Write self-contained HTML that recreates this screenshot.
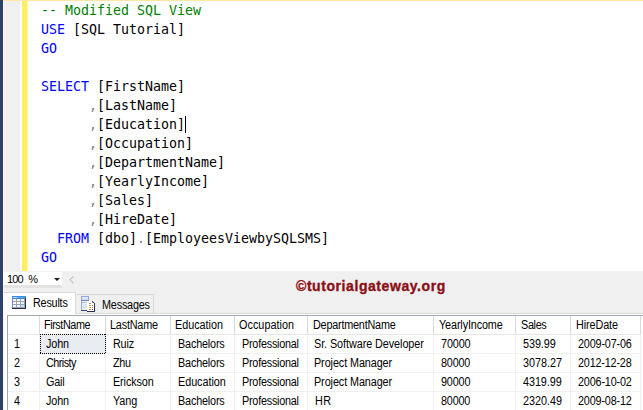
<!DOCTYPE html>
<html><head><meta charset="utf-8">
<style>
html,body{margin:0;padding:0;}
body{width:643px;height:410px;overflow:hidden;position:relative;background:#fff;font-family:"Liberation Sans",sans-serif;}
div,pre{position:absolute;}
#lb{left:0;top:0;width:3px;height:410px;background:#2f4166;}
#lb2{left:3px;top:1px;width:1px;height:409px;background:#f7f7f7;}
#topl{left:3px;top:0;width:640px;height:1px;background:#ffe8a6;}
#margin{left:4px;top:1px;width:16px;height:270px;background:#f0f0f0;}
#ybar{left:22px;top:1px;width:6px;height:270px;background:linear-gradient(90deg,#ffee62 0,#ffee62 5px,#fff6b0 5px,#fff6b0 6px);}
#code{left:41px;top:1px;margin:0;font-family:"DejaVu Sans Mono","Liberation Mono",monospace;font-size:13.29px;line-height:19px;color:#000;white-space:pre;}
.k{color:#0000ff}.c{color:#008000}.g{color:#808080}
#caret{left:185px;top:116px;width:1px;height:17px;background:#000;}
#bottom{left:4px;top:271px;width:639px;height:42px;background:#f0f0f0;}
#zoom{left:4px;top:272px;width:58px;height:13px;background:#fff;}
#zoomsh{left:4px;top:285px;width:58px;height:3px;background:#e3e3e3;}
#zt{left:7px;top:272px;font-size:11px;line-height:14px;letter-spacing:-0.1px;white-space:nowrap;}
#za{left:54px;top:278px;width:0;height:0;border-left:3px solid transparent;border-right:3px solid transparent;border-top:3px solid #1e1e1e;}
#wm{left:296px;top:277px;font-weight:bold;font-size:14px;letter-spacing:0.57px;color:#8b0f14;-webkit-text-stroke:0.35px #8b0f14;white-space:nowrap;line-height:18px;}
#pane{left:4px;top:313px;width:639px;height:97px;background:#fff;border-top:1px solid #d9d9d9;box-sizing:border-box;}
#tab1{left:4px;top:292px;width:72px;height:22px;background:#fff;border-top:1px solid #d9d9d9;border-right:1px solid #d9d9d9;box-sizing:border-box;}
#tab2{left:76px;top:294px;width:78px;height:19px;background:#f0f0f0;border:1px solid #d9d9d9;border-left:none;border-bottom:none;box-sizing:border-box;}
.tl{font-size:11px;line-height:14px;color:#000;letter-spacing:-0.4px;white-space:nowrap;}
#gridbg{left:7px;top:315px;width:636px;height:95px;border-top:1px solid #a3a7b0;border-left:1px solid #a3a7b0;box-sizing:border-box;}
#sel{left:40px;top:334px;width:66px;height:20px;background:#e9edf1;}
.dh{width:66px;height:1px;background:repeating-linear-gradient(90deg,#000 0,#000 1px,transparent 1px,transparent 2px);}
.dv{width:1px;height:20px;background:repeating-linear-gradient(180deg,#000 0,#000 1px,transparent 1px,transparent 2px);}
.vl{top:316px;width:1px;height:94px;background:#f0f0f0;}
.vh{top:316px;width:1px;height:18px;background:#dadada;}
.hl{left:8px;height:1px;width:633px;background:#f0f0f0;}
.t{font-size:12px;line-height:14px;color:#000;white-space:nowrap;transform:scaleX(0.9);transform-origin:0 0;}
</style></head><body>
<div id="margin"></div><div id="ybar"></div>
<pre id="code"><span class="c">-- Modified SQL View</span>
<span class="k">USE</span> [SQL Tutorial]
<span class="k">GO</span>

<span class="k">SELECT</span> [FirstName]
      <span class="g">,</span>[LastName]
      <span class="g">,</span>[Education]
      <span class="g">,</span>[Occupation]
      <span class="g">,</span>[DepartmentName]
      <span class="g">,</span>[YearlyIncome]
      <span class="g">,</span>[Sales]
      <span class="g">,</span>[HireDate]
  <span class="k">FROM</span> [dbo]<span class="g">.</span>[EmployeesViewbySQLSMS]
<span class="k">GO</span></pre>
<div id="caret"></div>
<div id="bottom"></div>
<div id="zoom"></div><div id="zoomsh"></div><div id="zt"><span style="letter-spacing:-0.9px">100</span><span style="margin-left:2.7px"> %</span></div><div id="za"></div>
<svg style="position:absolute;left:68px;top:275px" width="8" height="10" viewBox="0 0 8 10"><path d="M5.5 1.5 L1.8 4.8 L5.5 8" fill="none" stroke="#c4c4c4" stroke-width="1.1"/></svg>
<div id="wm">©tutorialgateway.org</div>
<div id="pane"></div>
<div id="gridbg"></div>
<div class="vl" style="left:39px"></div><div class="vh" style="left:39px"></div>
<div class="vl" style="left:105px"></div><div class="vh" style="left:105px"></div>
<div class="vl" style="left:170px"></div><div class="vh" style="left:170px"></div>
<div class="vl" style="left:234px"></div><div class="vh" style="left:234px"></div>
<div class="vl" style="left:307px"></div><div class="vh" style="left:307px"></div>
<div class="vl" style="left:433px"></div><div class="vh" style="left:433px"></div>
<div class="vl" style="left:515px"></div><div class="vh" style="left:515px"></div>
<div class="vl" style="left:570px"></div><div class="vh" style="left:570px"></div>
<div class="vl" style="left:640px"></div><div class="vh" style="left:640px"></div>
<div class="hl" style="top:334px;background:#e6e6e6"></div>
<div class="hl" style="top:353px"></div>
<div class="hl" style="top:372px"></div>
<div class="hl" style="top:391px"></div>
<div id="sel"></div><div class="dh" style="left:40px;top:334px"></div><div class="dh" style="left:40px;top:353px"></div><div class="dv" style="left:40px;top:334px"></div><div class="dv" style="left:105px;top:334px"></div>
<div class="t" id="h0" style="left:44.28px;top:318px;letter-spacing:-0.458px">FirstName</div>
<div class="t" id="h1" style="left:110.20px;top:318px;letter-spacing:-0.198px">LastName</div>
<div class="t" id="h2" style="left:175.42px;top:318px;letter-spacing:-0.020px">Education</div>
<div class="t" id="h3" style="left:239.32px;top:318px;letter-spacing:0.049px">Occupation</div>
<div class="t" id="h4" style="left:312.94px;top:318px;letter-spacing:-0.217px">DepartmentName</div>
<div class="t" id="h5" style="left:438.80px;top:318px;letter-spacing:-0.129px">YearlyIncome</div>
<div class="t" id="h6" style="left:520.56px;top:318px;letter-spacing:-0.361px">Sales</div>
<div class="t" id="h7" style="left:576.04px;top:318px;letter-spacing:-0.091px">HireDate</div>
<div class="t" id="r0c0" style="left:14.40px;top:337px;letter-spacing:0.000px">1</div>
<div class="t" id="r0c1" style="left:46.14px;top:337px;letter-spacing:-0.109px">John</div>
<div class="t" id="r0c2" style="left:112.78px;top:337px;letter-spacing:-0.204px">Ruiz</div>
<div class="t" id="r0c3" style="left:178.16px;top:337px;letter-spacing:-0.179px">Bachelors</div>
<div class="t" id="r0c4" style="left:241.98px;top:337px;letter-spacing:-0.245px">Professional</div>
<div class="t" id="r0c5" style="left:314.18px;top:337px;letter-spacing:-0.065px">Sr. Software Developer</div>
<div class="t" id="r0c6" style="left:441.19px;top:337px;letter-spacing:-0.130px">70000</div>
<div class="t" id="r0c7" style="left:523.11px;top:337px;letter-spacing:-0.076px">539.99</div>
<div class="t" id="r0c8" style="left:577.78px;top:337px;letter-spacing:-0.171px">2009-07-06</div>
<div class="t" id="r1c0" style="left:13.70px;top:356px;letter-spacing:0.000px">2</div>
<div class="t" id="r1c1" style="left:46.15px;top:356px;letter-spacing:-0.574px">Christy</div>
<div class="t" id="r1c2" style="left:113.41px;top:356px;letter-spacing:-0.266px">Zhu</div>
<div class="t" id="r1c3" style="left:178.16px;top:356px;letter-spacing:-0.179px">Bachelors</div>
<div class="t" id="r1c4" style="left:241.98px;top:356px;letter-spacing:-0.245px">Professional</div>
<div class="t" id="r1c5" style="left:314.45px;top:356px;letter-spacing:-0.089px">Project Manager</div>
<div class="t" id="r1c6" style="left:440.97px;top:356px;letter-spacing:-0.205px">80000</div>
<div class="t" id="r1c7" style="left:523.00px;top:356px;letter-spacing:0.000px">3078.27</div>
<div class="t" id="r1c8" style="left:577.80px;top:356px;letter-spacing:-0.189px">2012-12-28</div>
<div class="t" id="r2c0" style="left:13.70px;top:375px;letter-spacing:0.000px">3</div>
<div class="t" id="r2c1" style="left:46.48px;top:375px;letter-spacing:-0.187px">Gail</div>
<div class="t" id="r2c2" style="left:112.72px;top:375px;letter-spacing:-0.103px">Erickson</div>
<div class="t" id="r2c3" style="left:178.32px;top:375px;letter-spacing:-0.042px">Education</div>
<div class="t" id="r2c4" style="left:241.98px;top:375px;letter-spacing:-0.245px">Professional</div>
<div class="t" id="r2c5" style="left:314.45px;top:375px;letter-spacing:-0.089px">Project Manager</div>
<div class="t" id="r2c6" style="left:440.84px;top:375px;letter-spacing:-0.175px">90000</div>
<div class="t" id="r2c7" style="left:523.16px;top:375px;letter-spacing:-0.063px">4319.99</div>
<div class="t" id="r2c8" style="left:577.79px;top:375px;letter-spacing:-0.172px">2006-10-02</div>
<div class="t" id="r3c0" style="left:13.50px;top:394px;letter-spacing:0.000px">4</div>
<div class="t" id="r3c1" style="left:45.98px;top:394px;letter-spacing:-0.133px">John</div>
<div class="t" id="r3c2" style="left:113.02px;top:394px;letter-spacing:-0.043px">Yang</div>
<div class="t" id="r3c3" style="left:178.16px;top:394px;letter-spacing:-0.179px">Bachelors</div>
<div class="t" id="r3c4" style="left:241.98px;top:394px;letter-spacing:-0.245px">Professional</div>
<div class="t" id="r3c5" style="left:314.60px;top:394px;letter-spacing:0.600px">HR</div>
<div class="t" id="r3c6" style="left:440.97px;top:394px;letter-spacing:-0.205px">80000</div>
<div class="t" id="r3c7" style="left:523.00px;top:394px;letter-spacing:0.000px">2320.49</div>
<div class="t" id="r3c8" style="left:577.79px;top:394px;letter-spacing:-0.172px">2009-08-12</div>
<div id="tab1"></div><div id="tab2"></div>
<div class="t" id="tl1" style="left:32.72px;top:296px;letter-spacing:-0.222px">Results</div>
<div class="t" id="tl2" style="left:102.05px;top:298px;letter-spacing:-0.195px">Messages</div>
<svg style="position:absolute;left:12px;top:296px" width="14" height="13" viewBox="0 0 14 13" shape-rendering="crispEdges">
<rect x="0" y="0" width="14" height="13" fill="#9aa0ae"/>
<rect x="0" y="0" width="14" height="3" fill="#3b8ce0"/>
<rect x="1" y="1" width="4" height="1" fill="#b8d8f8"/>
<rect x="5" y="1" width="8" height="1" fill="#5aa2ea"/>
<rect x="0" y="3" width="1" height="9" fill="#6f88d8"/>
<rect x="13" y="2" width="1" height="11" fill="#2a2e48"/>
<rect x="0" y="12" width="14" height="1" fill="#2a2e48"/>
<g fill="#fff"><rect x="1" y="3" width="3" height="2"/><rect x="5" y="3" width="3" height="2"/><rect x="9" y="3" width="3" height="2"/>
<rect x="1" y="6" width="3" height="2"/><rect x="5" y="6" width="3" height="2"/><rect x="9" y="6" width="3" height="2" fill="#d8f4ff"/>
<rect x="1" y="9" width="3" height="2"/><rect x="5" y="9" width="3" height="2" fill="#e8f6ff"/><rect x="9" y="9" width="3" height="2" fill="#b8e6ff"/></g>
</svg>
<svg style="position:absolute;left:81px;top:296px" width="15" height="16" viewBox="0 0 15 16" shape-rendering="crispEdges">
<rect x="0" y="0" width="8" height="15" fill="#98a4dc"/>
<rect x="1" y="1" width="6" height="13" fill="#e6effa"/>
<rect x="1" y="2" width="6" height="2" fill="#cfe0f4"/>
<rect x="0" y="4" width="8" height="1" fill="#7b84a8"/>
<rect x="1" y="6" width="5" height="1" fill="#b8c4dc"/>
<rect x="2" y="8" width="4" height="4" fill="#d2e6f8"/>
<rect x="0" y="14" width="8" height="1" fill="#3a4878"/>
<rect x="6" y="5" width="8" height="11" fill="#2a3260"/>
<rect x="6" y="5" width="7" height="10" fill="#fff"/>
<rect x="12" y="5" width="2" height="2" fill="#f0f0f0"/>
<rect x="11" y="5" width="1" height="1" fill="#2a3260"/><rect x="12" y="6" width="1" height="1" fill="#2a3260"/><rect x="11" y="6" width="1" height="1" fill="#8890b0"/>
<g fill="#f09030"><rect x="8" y="7" width="2" height="1"/><rect x="8" y="9" width="2" height="1"/><rect x="8" y="11" width="2" height="1"/><rect x="8" y="13" width="2" height="1"/></g>
<rect x="11" y="9" width="1" height="1" fill="#a09040"/><rect x="11" y="11" width="1" height="1" fill="#a09040"/><rect x="11" y="13" width="1" height="1" fill="#208040"/>
</svg>
<div id="topl"></div><div id="lb"></div><div id="lb2"></div>
</body></html>
